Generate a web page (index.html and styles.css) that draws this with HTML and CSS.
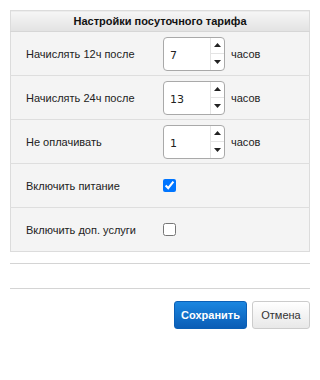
FILE: index.html
```html
<!DOCTYPE html>
<html lang="ru">
<head>
  <meta charset="UTF-8" />
  <title>Настройки посуточного тарифа</title>
  <link rel="stylesheet" href="styles.css">
</head>
<body>
  <div class="dialog">
    <table class="settings">
      <thead>
        <tr><th colspan="2">Настройки посуточного тарифа</th></tr>
      </thead>
      <tbody>
        <tr>
          <td class="label">Начислять 12ч после</td>
          <td>
            <div class="field">
              <div class="spin">
                <input class="spin-value" value="7" />
                <div class="spin-buttons">
                  <span class="spin-btn up"><svg width="7" height="4" viewBox="0 0 7 4"><path d="M0 4 L3.5 0 L7 4 Z" fill="#222"/></svg></span>
                  <span class="spin-btn down"><svg width="7" height="4" viewBox="0 0 7 4"><path d="M0 0 L3.5 4 L7 0 Z" fill="#222"/></svg></span>
                </div>
              </div>
              <span class="unit">часов</span>
            </div>
          </td>
        </tr>
        <tr>
          <td class="label">Начислять 24ч после</td>
          <td>
            <div class="field">
              <div class="spin">
                <input class="spin-value" value="13" />
                <div class="spin-buttons">
                  <span class="spin-btn up"><svg width="7" height="4" viewBox="0 0 7 4"><path d="M0 4 L3.5 0 L7 4 Z" fill="#222"/></svg></span>
                  <span class="spin-btn down"><svg width="7" height="4" viewBox="0 0 7 4"><path d="M0 0 L3.5 4 L7 0 Z" fill="#222"/></svg></span>
                </div>
              </div>
              <span class="unit">часов</span>
            </div>
          </td>
        </tr>
        <tr>
          <td class="label">Не оплачивать</td>
          <td>
            <div class="field">
              <div class="spin">
                <input class="spin-value" value="1" />
                <div class="spin-buttons">
                  <span class="spin-btn up"><svg width="7" height="4" viewBox="0 0 7 4"><path d="M0 4 L3.5 0 L7 4 Z" fill="#222"/></svg></span>
                  <span class="spin-btn down"><svg width="7" height="4" viewBox="0 0 7 4"><path d="M0 0 L3.5 4 L7 0 Z" fill="#222"/></svg></span>
                </div>
              </div>
              <span class="unit">часов</span>
            </div>
          </td>
        </tr>
        <tr>
          <td class="label">Включить питание</td>
          <td><input type="checkbox" class="check" checked /></td>
        </tr>
        <tr>
          <td class="label">Включить доп. услуги</td>
          <td><input type="checkbox" class="check" /></td>
        </tr>
      </tbody>
    </table>

    <hr class="sep" />
    <hr class="sep" />

    <div class="actions">
      <button class="btn btn-primary">Сохранить</button>
      <button class="btn btn-cancel">Отмена</button>
    </div>
  </div>
</body>
</html>
```

FILE: styles.css
```css
body {
  margin: 0;
  background: #fff;
  font-family: 'Liberation Sans', Arial, sans-serif;
  font-size: 11px;
  color: #222;
}

.dialog {
  width: 300px;
  padding: 10px;
}

.settings {
  width: 300px;
  border-collapse: collapse;
  border: 1px solid #dcdcdc;
  background: #f4f4f4;
}

.settings th {
  height: 20px;
  padding: 0;
  font-weight: bold;
  font-size: 11px;
  text-align: center;
  color: #111;
  background: linear-gradient(to bottom, #f6f6f6, #e2e2e2);
  border-bottom: 1px solid #d6d6d6;
}

.settings td {
  height: 43px;
  padding: 0;
  border-top: 1px solid #dedede;
  vertical-align: middle;
}

.settings td.label {
  width: 137px;
  padding-left: 15px;
}

.field {
  display: flex;
  align-items: center;
  gap: 6px;
}

.spin {
  display: flex;
  width: 60px;
  height: 32px;
  border: 1px solid #a9a9a9;
  border-radius: 4px;
  background: #fff;
  overflow: hidden;
}

.spin-value {
  width: 40px;
  border: none;
  padding: 3px 0 0 6px;
  font-family: 'DejaVu Sans', sans-serif;
  font-size: 11px;
  color: #222;
  background: transparent;
  outline: none;
}

.spin-buttons {
  display: flex;
  flex-direction: column;
  width: 17px;
  margin-left: auto;
}

.spin-btn {
  flex: 1;
  display: flex;
  align-items: center;
  justify-content: center;
  border-left: 1px solid #e4e4e4;
}

.spin-btn.up {
  border-bottom: 1px solid #e4e4e4;
}

.unit {
  font-size: 11px;
}

.check {
  width: 13px;
  height: 13px;
  margin: 0;
  display: block;
  accent-color: #0075ff;
}

.sep {
  border: none;
  border-top: 1px solid #d4d4d4;
  margin: 11px 0 0;
}

.sep + .sep {
  margin-top: 24px;
}

.actions {
  display: flex;
  justify-content: flex-end;
  gap: 5px;
  margin-top: 12px;
}

.btn {
  height: 28px;
  padding: 0;
  font-family: 'Liberation Sans', Arial, sans-serif;
  font-size: 11px;
  color: #333;
  border: 1px solid #ccc;
  border-radius: 3px;
  background: linear-gradient(to bottom, #fff, #e8e8e8);
}

.btn-cancel {
  width: 58px;
}

.btn-primary {
  width: 73px;
  font-weight: bold;
  color: #fff;
  border-color: #0b5fb5;
  background: linear-gradient(to bottom, #1b86e0, #0a5db6);
}
```
